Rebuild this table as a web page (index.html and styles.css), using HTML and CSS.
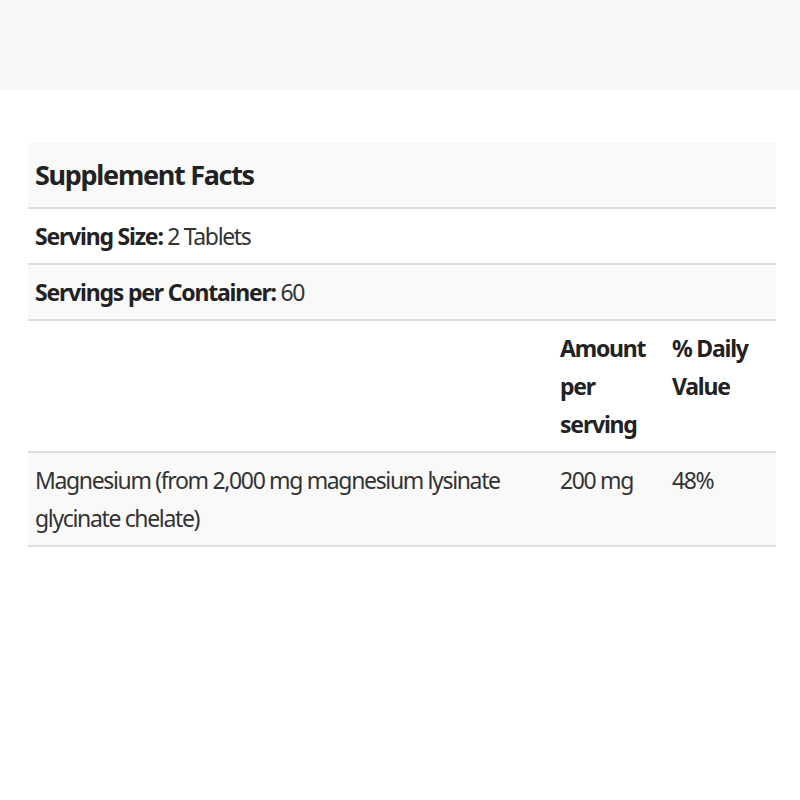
FILE: index.html
```html
<!DOCTYPE html>
<html>
<head>
<meta charset="utf-8">
<link rel="stylesheet" href="styles.css">
</head>
<body>
<div class="topband"></div>
<main class="content">
  <table class="facts">
    <colgroup>
      <col class="col1">
      <col class="col2">
      <col class="col3">
    </colgroup>
    <tr class="row shaded">
      <th colspan="3" class="title">Supplement Facts</th>
    </tr>
    <tr class="row">
      <td colspan="3"><strong>Serving Size:</strong> 2 Tablets</td>
    </tr>
    <tr class="row shaded">
      <td colspan="3"><strong>Servings per Container:</strong> 60</td>
    </tr>
    <tr class="row">
      <th></th>
      <th>Amount per serving</th>
      <th>% Daily Value</th>
    </tr>
    <tr class="row shaded">
      <td>Magnesium (from 2,000 mg magnesium lysinate glycinate chelate)</td>
      <td>200 mg</td>
      <td>48%</td>
    </tr>
  </table>
</main>
</body>
</html>
```

FILE: styles.css
```css
html, body {
  margin: 0;
  padding: 0;
  background: #ffffff;
}
body {
  font-family: "Noto Sans", "Open Sans", sans-serif;
  color: #333333;
}
.topband {
  height: 90px;
  background: #f8f8f8;
}
.content {
  padding: 53px 24px 0 28px;
}
.facts {
  width: 748px;
  border-collapse: collapse;
  table-layout: fixed;
}
.col1 { width: 525px; }
.col2 { width: 112px; }
.col3 { width: 111px; }
.row {
  border-bottom: 2px solid #dedede;
}
.shaded {
  background: #f9f9f9;
}
.facts th, .facts td {
  text-align: left;
  vertical-align: top;
  padding: 8px 7px;
  font-size: 23px;
  letter-spacing: -1.35px;
  line-height: 38px;
}
.facts th {
  font-weight: 700;
  color: #222222;
  letter-spacing: -1.2px;
}
.facts strong {
  font-weight: 700;
  color: #222222;
  letter-spacing: -1.2px;
}
.facts .title {
  font-size: 27px;
  letter-spacing: -1.3px;
  line-height: 48px;
}
```
